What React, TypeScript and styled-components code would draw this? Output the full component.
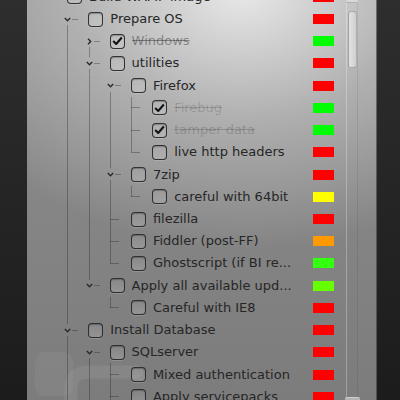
import React from 'react';
import styled, { createGlobalStyle, css } from 'styled-components';

const Global = createGlobalStyle`
  html, body { margin: 0; padding: 0; background: #222; }
  body { font-family: "DejaVu Sans", "Liberation Sans", sans-serif; }
`;

const ROW = 22.22;
const INDENT = 21.3;
const LINE = 'rgba(30,30,30,0.34)';

type Node = {
  label: string;
  color: string;
  checked?: boolean;
  open?: boolean;
  collapsed?: boolean;
  more?: boolean;
  tone?: number;
  children?: Node[];
};

const tree: Node[] = [
  {
    label: 'Build WAMP image', color: '#ff0000', open: true, children: [
      {
        label: 'Prepare OS', color: '#ff0000', open: true, children: [
          { label: 'Windows', color: '#00ff00', checked: true, collapsed: true, tone: 0.36 },
          {
            label: 'utilities', color: '#ff0000', open: true, children: [
              {
                label: 'Firefox', color: '#ff0000', open: true, children: [
                  { label: 'Firebug', color: '#00ff00', checked: true, tone: 0.16 },
                  { label: 'tamper data', color: '#00ff00', checked: true, tone: 0.18 },
                  { label: 'live http headers', color: '#ff0000' },
                ],
              },
              {
                label: '7zip', color: '#ff0000', open: true, children: [
                  { label: 'careful with 64bit', color: '#ffff00' },
                ],
              },
              { label: 'filezilla', color: '#ff0000' },
              { label: 'Fiddler (post-FF)', color: '#ff9900' },
              { label: 'Ghostscript (if BI re...', color: '#33ff11' },
            ],
          },
          {
            label: 'Apply all available upd...', color: '#66ff00', open: true, children: [
              { label: 'Careful with IE8', color: '#ff0000' },
            ],
          },
        ],
      },
      {
        label: 'Install Database', color: '#ff0000', open: true, more: true, children: [
          {
            label: 'SQLserver', color: '#ff0000', open: true, more: true, children: [
              { label: 'Mixed authentication', color: '#ff0000' },
              { label: 'Apply servicepacks', color: '#ff0000', more: true },
            ],
          },
        ],
      },
    ],
  },
];

type Flat = { node: Node; level: number; guides: boolean[]; hasNext: boolean; first: boolean };

function flatten(nodes: Node[], level: number, guides: boolean[], out: Flat[]) {
  nodes.forEach((node, i) => {
    const hasNext = i < nodes.length - 1 || !!node.more;
    out.push({ node, level, guides, hasNext, first: i === 0 });
    if (node.open && node.children) {
      flatten(node.children, level + 1, [...guides, level === 0 ? false : hasNext], out);
    }
  });
  return out;
}

const rows = flatten(tree, 0, [], []);

const Screen = styled.div`
  width: 400px;
  height: 400px;
  overflow: hidden;
  display: flex;
  padding-left: 27px;
  box-sizing: border-box;
  background: linear-gradient(to bottom, #2e2e2e, #1c1c1c);
`;

const Panel = styled.div`
  position: relative;
  width: 350px;
  height: 400px;
  flex: none;
  display: flex;
  box-sizing: border-box;
  border-right: 1px solid rgba(0, 0, 0, 0.35);
  background:
    radial-gradient(ellipse 330px 260px at 215px -10px,
      rgba(255, 255, 255, 0.8) 0%,
      rgba(255, 255, 255, 0.32) 50%,
      rgba(255, 255, 255, 0) 100%),
    linear-gradient(to bottom, #8f8f8f, #7c7c7c);
`;

const Watermark = styled.svg`
  position: absolute;
  left: 0;
  bottom: 0;
  pointer-events: none;
`;

const TreeArea = styled.div`
  position: relative;
  flex: 1;
  min-width: 0;
  overflow: hidden;
`;

const List = styled.div`
  margin-top: -14.3px;
  display: flex;
  flex-direction: column;
`;

const Row = styled.div`
  height: ${ROW}px;
  display: flex;
  align-items: center;
  padding-left: 9px;
`;

type BranchKind = 'blank' | 'pipe' | 'tee' | 'elbow' | 'exp';

const g = `linear-gradient(${LINE}, ${LINE})`;

const Branch = styled.div<{ $kind: BranchKind; $above?: boolean; $below?: boolean }>`
  width: ${INDENT}px;
  height: 100%;
  flex: none;
  display: flex;
  align-items: center;
  padding-left: 7px;
  box-sizing: border-box;
  background-repeat: no-repeat;
  ${(p) => p.$kind === 'pipe' && css`
    background-image: ${g};
    background-position: 10px 0;
    background-size: 1px 100%;
  `}
  ${(p) => p.$kind === 'tee' && css`
    background-image: ${g}, ${g};
    background-position: 10px 0, 10px 50%;
    background-size: 1px 100%, 9px 1px;
  `}
  ${(p) => p.$kind === 'elbow' && css`
    background-image: ${g}, ${g};
    background-position: 10px 0, 10px 50%;
    background-size: 1px 50%, 9px 1px;
  `}
  ${(p) => p.$kind === 'exp' && css`
    background-image: ${g}, ${p.$above ? g : 'none'}, ${p.$below ? g : 'none'};
    background-position: 15px 50%, 10px 0, 10px 100%;
    background-size: 6px 1px, 1px calc(50% - 6px), 1px calc(50% - 6px);
  `}
`;

const Chevron = styled.svg`
  display: block;
  flex: none;
`;

const Check = styled.div<{ $checked?: boolean }>`
  width: 15px;
  height: 15px;
  flex: none;
  margin-left: 9.7px;
  box-sizing: border-box;
  border: 1.5px solid rgba(35, 35, 35, 0.9);
  border-radius: 4px;
  background: linear-gradient(to bottom, rgba(255,255,255,0.06), rgba(255,255,255,0.16));
  box-shadow: inset 0 1px 1px rgba(0, 0, 0, 0.25), 0 1px 0 rgba(255, 255, 255, 0.15);
  display: flex;
  align-items: center;
  justify-content: center;
`;

const Label = styled.span<{ $done?: boolean; $tone?: number }>`
  margin-left: 7px;
  flex: 1;
  min-width: 0;
  font-family: "DejaVu Sans", sans-serif;
  font-size: 13px;
  line-height: 16px;
  white-space: nowrap;
  overflow: hidden;
  color: #262626;
  ${(p) => p.$done && css`
    color: rgba(0, 0, 0, ${p.$tone ?? 0.3});
    text-decoration: line-through;
  `}
`;

const Swatch = styled.div<{ $color: string }>`
  width: 21px;
  height: 10px;
  flex: none;
  margin-right: 12px;
  background: ${(p) => p.$color};
`;

const ScrollColumn = styled.div`
  width: 12px;
  flex: none;
  margin-right: 18px;
  display: flex;
  flex-direction: column;
`;

const ScrollButton = styled.div<{ $end?: boolean }>`
  height: 14px;
  flex: none;
  box-sizing: border-box;
  border-radius: 2px;
  ${(p) => p.$end
    ? css`
      margin-bottom: -11px;
      margin-left: -1px;
      margin-right: -2px;
      background: #b4b4b4;
      border-top: 1px solid rgba(255, 255, 255, 0.35);
    `
    : css`
      margin-top: -11px;
      background: #d8d8d8;
      border-bottom: 1px solid rgba(0, 0, 0, 0.18);
    `}
`;

const Track = styled.div`
  flex: 1;
  box-sizing: border-box;
  border-left: 1px solid rgba(255, 255, 255, 0.28);
  border-right: 1px solid rgba(0, 0, 0, 0.08);
  padding: 8px 1px 0 1px;
`;

const Thumb = styled.div`
  width: 9px;
  height: 57px;
  box-sizing: border-box;
  border: 1px solid rgba(0, 0, 0, 0.22);
  border-radius: 3px;
  background: linear-gradient(to right, #e2e2e2, #cfcfcf);
`;

function BranchCell({ r }: { r: Flat }) {
  const { node, level, hasNext, first } = r;
  if (node.open || node.collapsed) {
    return (
      <Branch $kind="exp" $above={level > 0 && !first} $below={level > 0 && hasNext}>
        <Chevron width="7" height="7" viewBox="0 0 7 7">
          {node.open ? (
            <path d="M0.8 2 L3.5 4.7 L6.2 2" fill="none" stroke="#2a2a2a" strokeWidth="1.4" />
          ) : (
            <path d="M2 0.8 L4.7 3.5 L2 6.2" fill="none" stroke="#2a2a2a" strokeWidth="1.4" />
          )}
        </Chevron>
      </Branch>
    );
  }
  return <Branch $kind={hasNext ? 'tee' : 'elbow'} />;
}

export default function App() {
  return (
    <>
      <Global />
      <Screen>
        <Panel>
          <Watermark width="140" height="60" viewBox="0 0 140 60">
            <rect x="8" y="12" width="38" height="44" rx="10" fill="rgba(255,255,255,0.05)" />
            <path d="M44 64 L44 48 Q44 32 62 32 L110 32" fill="none" stroke="rgba(255,255,255,0.07)" strokeWidth="13" strokeLinecap="round" />
          </Watermark>
          <TreeArea>
            <List>
              {rows.map((r, i) => (
                <Row key={i}>
                  {r.guides.map((on, k) => (
                    <Branch key={k} $kind={on ? 'pipe' : 'blank'} />
                  ))}
                  <BranchCell r={r} />
                  <Check $checked={r.node.checked}>
                    {r.node.checked && (
                      <svg width="11" height="10" viewBox="0 0 11 10">
                        <path d="M1.2 5 L4.2 8 L9.8 1.5" fill="none" stroke="#111" strokeWidth="2" strokeLinejoin="round" />
                      </svg>
                    )}
                  </Check>
                  <Label $done={r.node.checked} $tone={r.node.tone}>{r.node.label}</Label>
                  <Swatch $color={r.node.color} />
                </Row>
              ))}
            </List>
          </TreeArea>
          <ScrollColumn>
            <ScrollButton />
            <Track>
              <Thumb />
            </Track>
            <ScrollButton $end />
          </ScrollColumn>
        </Panel>
      </Screen>
    </>
  );
}
